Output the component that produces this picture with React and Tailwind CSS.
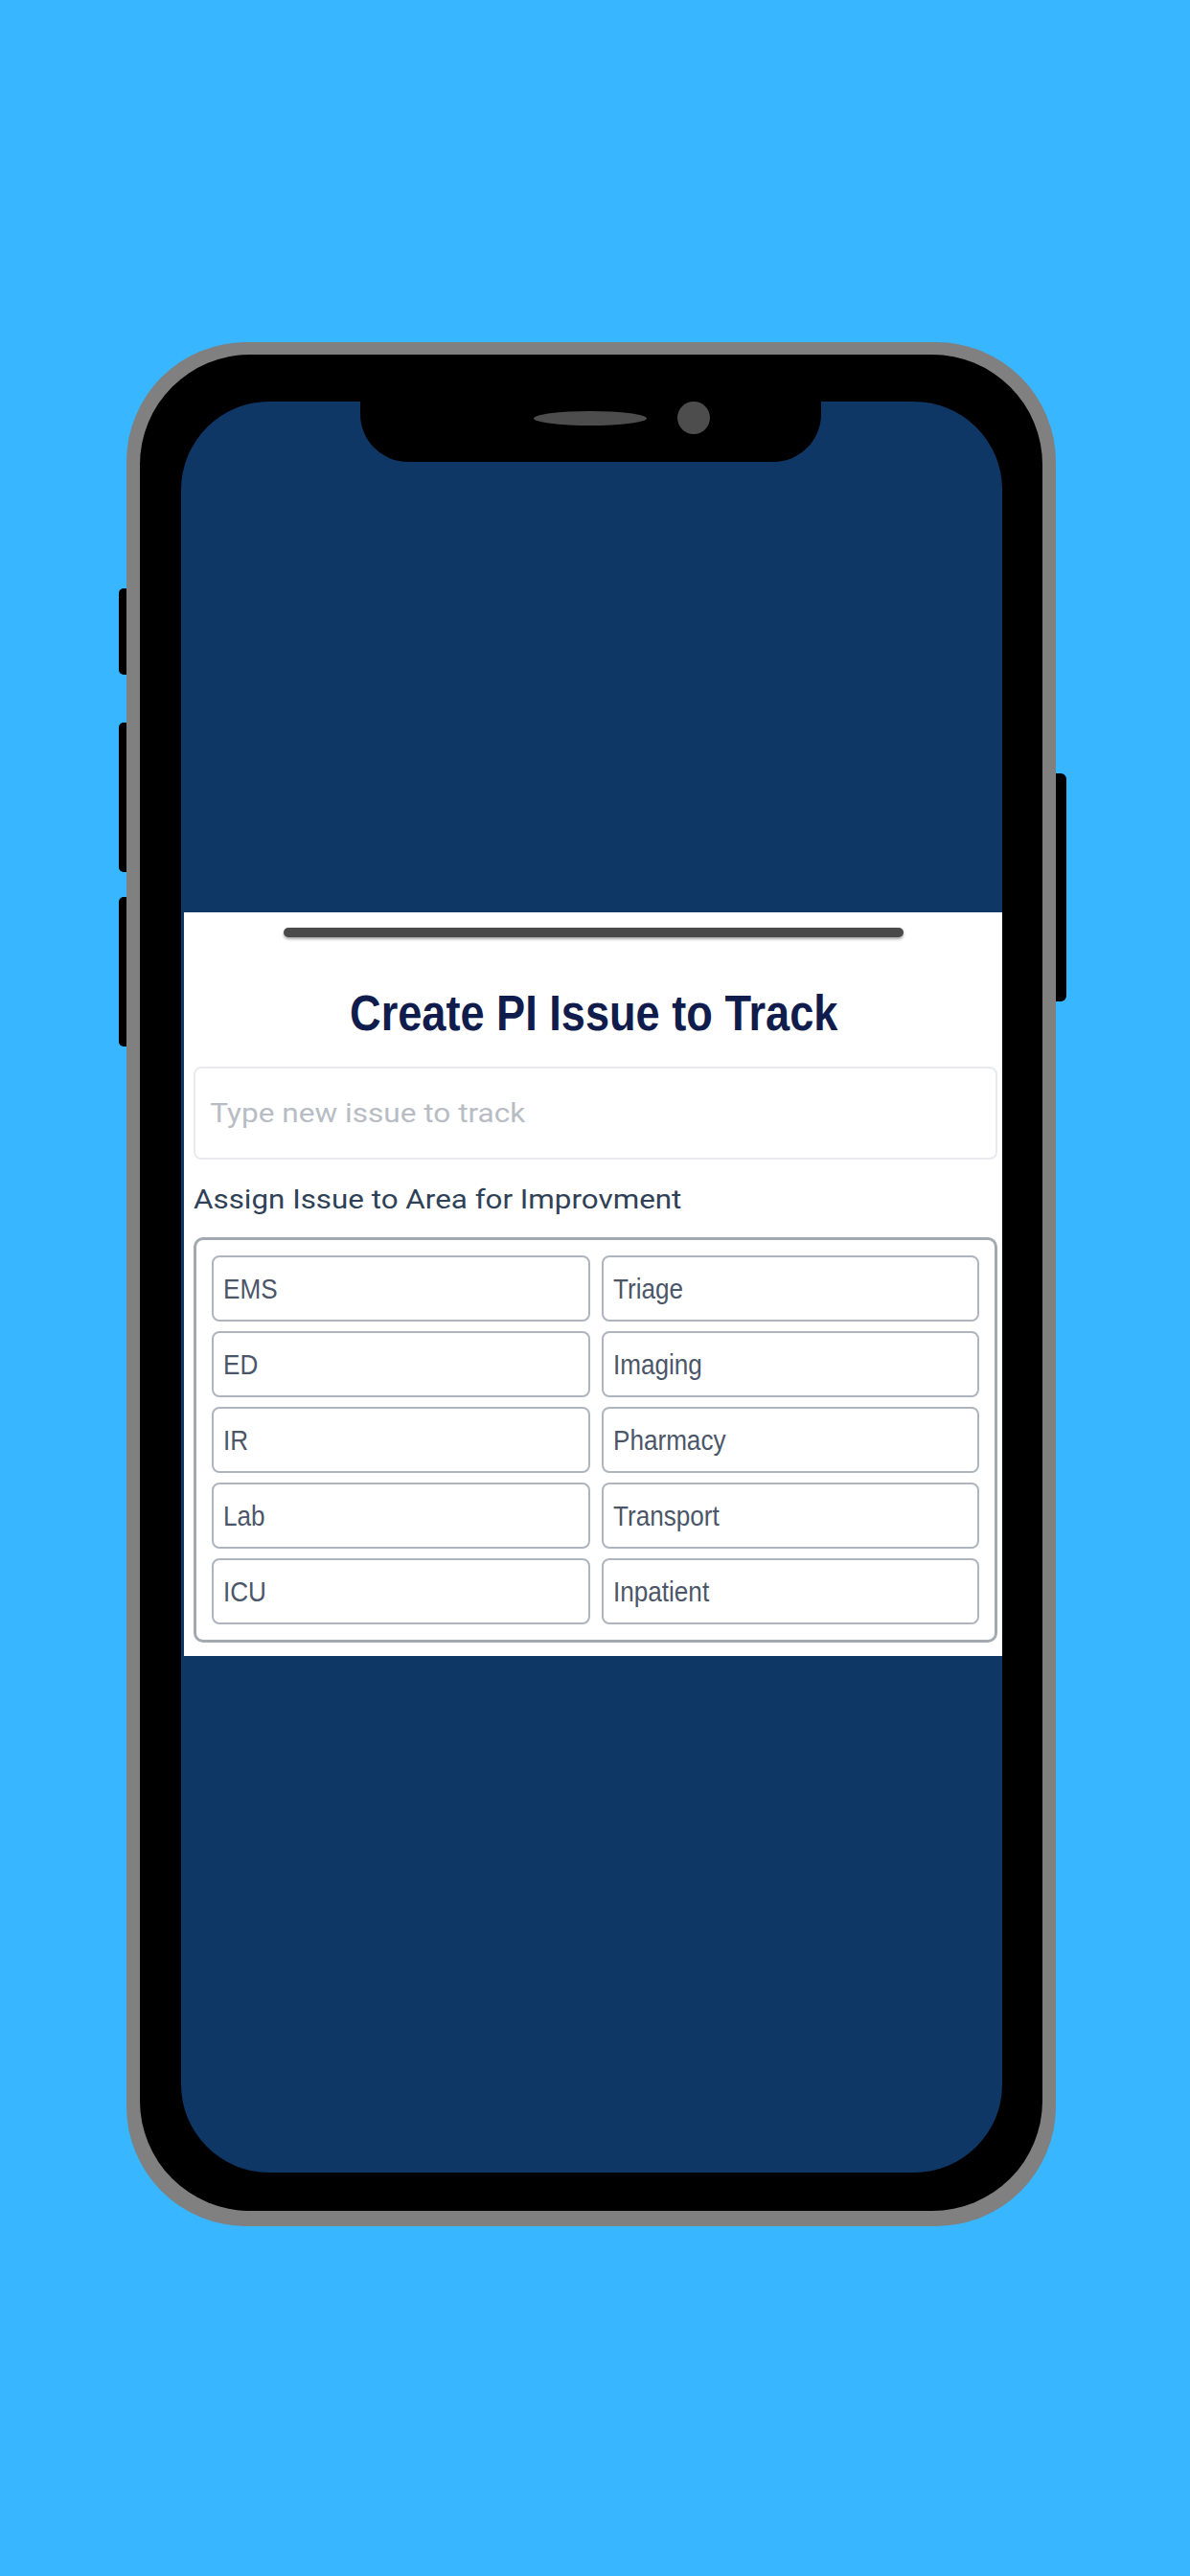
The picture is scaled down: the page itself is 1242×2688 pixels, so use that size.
import React from 'react';

const areas = [
  ['EMS', 'Triage'],
  ['ED', 'Imaging'],
  ['IR', 'Pharmacy'],
  ['Lab', 'Transport'],
  ['ICU', 'Inpatient'],
];

function AreaCell({ label }) {
  return (
    <button className="h-[69px] border-2 border-[#aeb5be] rounded-[8px] bg-white flex items-center pl-[10px] text-left">
      <span className="inline-block origin-left scale-x-[0.9] text-[29px] leading-[30px] text-[#4b5668] font-['Liberation_Sans',sans-serif]">
        {label}
      </span>
    </button>
  );
}

function IssueSheet() {
  return (
    <div className="mt-[470px] ml-[3px] w-[855px] bg-white px-[10px] pt-[16px] pb-[14px]">
      <div className="mx-auto w-[647px] h-[10px] rounded-full bg-[#4a4a4a] shadow-[0_2px_3px_rgba(0,0,0,0.35)]" />
      <h1 className="mt-[55px] flex justify-center">
        <span className="inline-block scale-x-[0.885] text-[51px] leading-[50px] font-bold text-[#101c4c] font-['Liberation_Sans',sans-serif] whitespace-nowrap">
          Create PI Issue to Track
        </span>
      </h1>
      <div className="mt-[30px] w-[839px] h-[97px] border-2 border-[#e8eaee] rounded-[8px] overflow-hidden">
        <input
          className="w-[710px] h-full origin-left scale-x-[1.17] bg-transparent pl-[13px] text-[27px] font-['Roboto',sans-serif] text-[#333] placeholder:text-[#b8bcc4] outline-none"
          placeholder="Type new issue to track"
        />
      </div>
      <div className="mt-[28px] origin-left scale-x-[1.12] text-[28px] leading-[28px] font-['Roboto',sans-serif] text-[#2f4156] whitespace-nowrap">
        Assign Issue to Area for Improvment
      </div>
      <div className="mt-[25px] w-[839px] border-[3px] border-[#a3a9b0] rounded-[10px] p-[16px] grid grid-cols-2 gap-x-[12px] gap-y-[10px]">
        {areas.map(([a, b]) => (
          <React.Fragment key={a}>
            <AreaCell label={a} />
            <AreaCell label={b} />
          </React.Fragment>
        ))}
      </div>
    </div>
  );
}

export default function App() {
  return (
    <div className="w-[1242px] h-[2688px] bg-[#38b6ff] overflow-hidden pt-[357px] pl-[124px] flex items-start">
      {/* left side buttons */}
      <div className="w-[8px] pt-[257px] flex flex-col">
        <div className="h-[90px] bg-black rounded-l-[5px]" />
        <div className="mt-[50px] h-[156px] bg-black rounded-l-[5px]" />
        <div className="mt-[26px] h-[156px] bg-black rounded-l-[5px]" />
      </div>

      <div className="w-[970px] h-[1966px] rounded-[125px] bg-[#808080] pt-[13px] px-[14px] pb-[16px]">
        <div className="w-[942px] h-[1937px] rounded-[115px] bg-black pt-[49px] pl-[43px] pr-[42px] pb-[40px]">
          <div className="w-[857px] h-[1848px] rounded-[92px] bg-[#0f3766] overflow-hidden flex flex-col">
            {/* notch */}
            <div className="ml-[187px] w-[481px] h-[63px] shrink-0 bg-black rounded-b-[50px]">
              <div className="flex items-center h-[34px] pl-[181px] gap-[32px]">
                <div className="w-[118px] h-[15px] rounded-[50%] bg-[#4d4d4d]" />
                <div className="w-[34px] h-[34px] rounded-full bg-[#4d4d4d]" />
              </div>
            </div>
            <IssueSheet />
          </div>
        </div>
      </div>

      {/* right side button */}
      <div className="mt-[450px] w-[11px] h-[238px] bg-black rounded-r-[6px]" />
    </div>
  );
}
